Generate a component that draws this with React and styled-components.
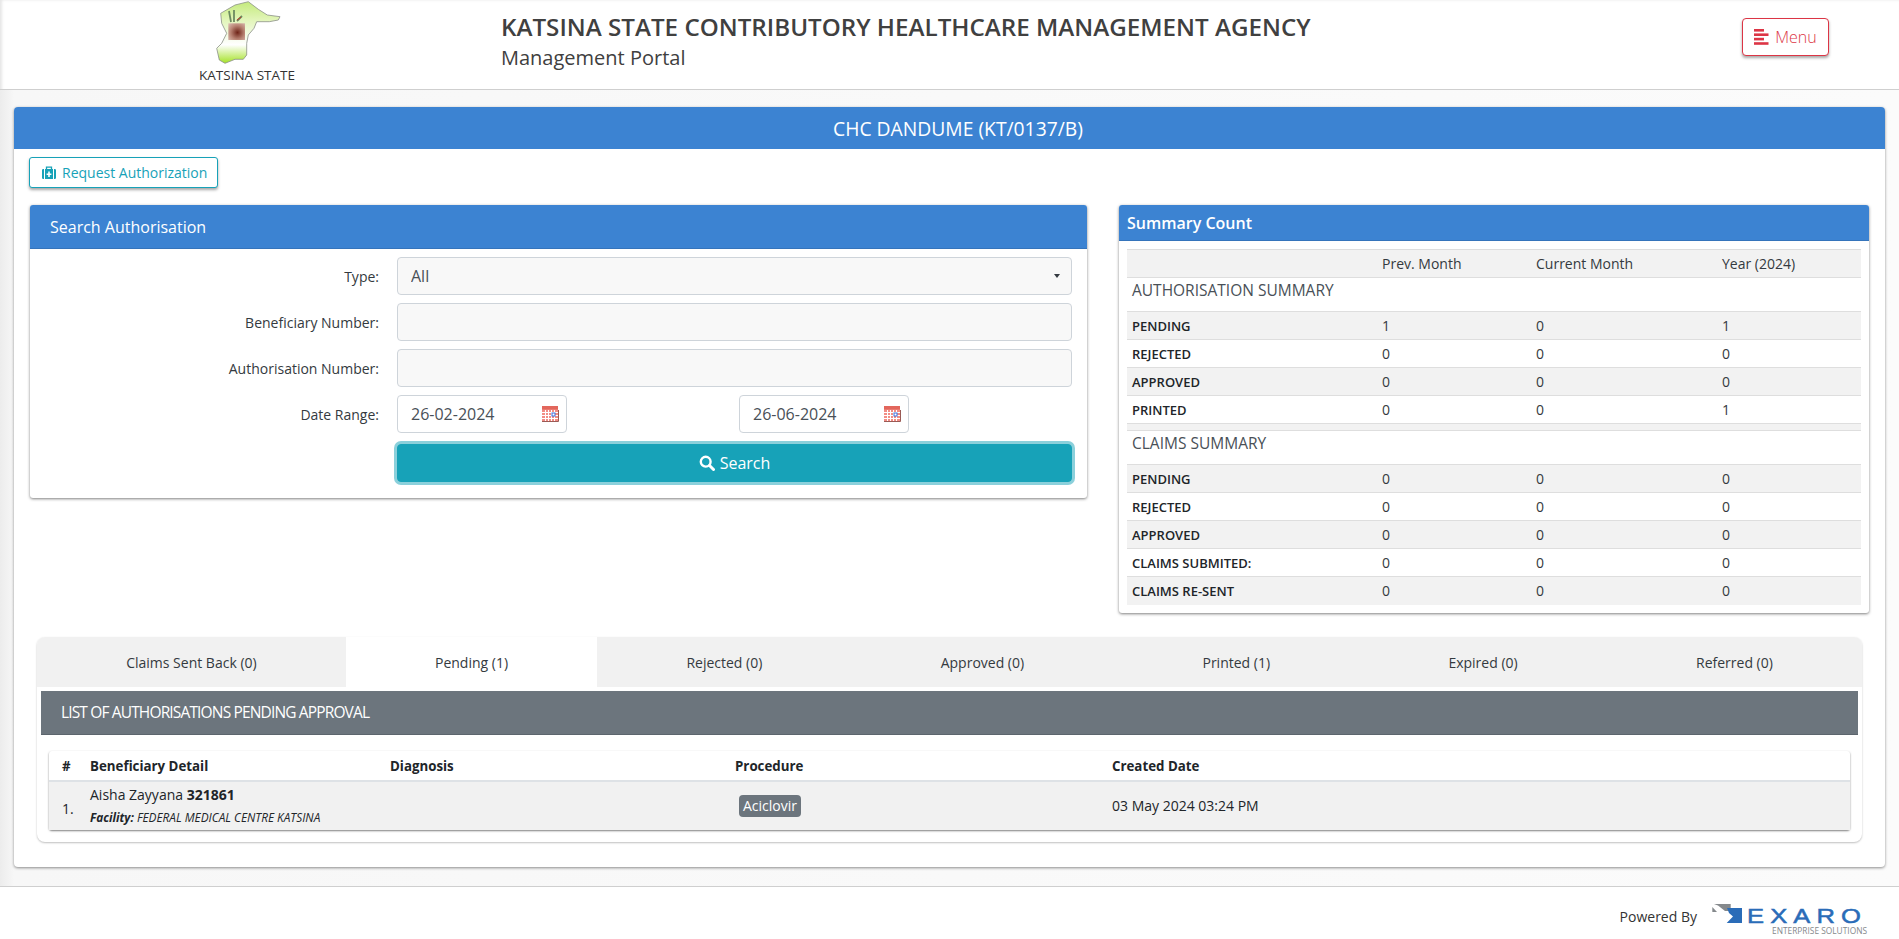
import React from "react";
import styled, { createGlobalStyle } from "styled-components";

const Global = createGlobalStyle`
  html, body { margin: 0; padding: 0; background: #fff; }
  body { font-family: "Open Sans", "Noto Sans", sans-serif; font-size: 14px; color: #212529; }
  * { box-sizing: border-box; }
`;

const Page = styled.div`
  min-height: 939px;
  display: flex;
  flex-direction: column;
  background: #fff;
  box-shadow: inset 2px 0 3px rgba(0, 0, 0, 0.1);
`;

const Header = styled.header`
  height: 90px;
  display: grid;
  grid-template-columns: 494px 1fr auto;
  align-items: start;
  padding-right: 70px;
  border-bottom: 1px solid #cfcfcf;
`;

const LogoBlock = styled.div`
  display: flex;
  flex-direction: column;
  align-items: center;
`;

const StateName = styled.div`
  font-size: 13.5px;
  line-height: 18px;
  margin-top: 2px;
  color: #333;
`;

const TitleBlock = styled.div`
  padding: 9px 0 0 7px;
`;

const Title = styled.div`
  font-size: 24.2px;
  line-height: 36px;
  font-weight: 600;
  color: #404040;
  white-space: nowrap;
`;

const SubTitle = styled.div`
  font-size: 20px;
  line-height: 26px;
  color: #404040;
`;

const MenuButton = styled.button`
  margin-top: 18px;
  width: 87px;
  height: 38px;
  display: flex;
  align-items: center;
  justify-content: center;
  gap: 6px;
  background: #fff;
  color: #dc3545;
  border: 1px solid #dc3545;
  border-radius: 4px;
  font: 300 16px "Open Sans", sans-serif;
  box-shadow: 0 2px 3px rgba(0, 0, 0, 0.35);
`;

const Main = styled.main`
  flex: 1;
  padding: 17px 14px 19px;
  background:
    radial-gradient(ellipse 420px 60px at 420px 915px, #fff 0%, rgba(255, 255, 255, 0) 100%),
    linear-gradient(to right, #ececec 0, #f7f7f7 14px, #fbfbfb 100%);
`;

const Card = styled.section`
  background: #fff;
  border-radius: 4px;
  box-shadow: 0 1px 3px rgba(0, 0, 0, 0.45);
`;

const CardBar = styled.div`
  height: 42px;
  display: flex;
  align-items: center;
  justify-content: center;
  padding-left: 17px;
  background: #3c83d2;
  color: #fff;
  font-size: 19.3px;
  font-weight: 400;
  border-radius: 4px 4px 0 0;
`;

const CardBody = styled.div`
  padding: 8px 16px 25px 15px;
`;

const OutlineButton = styled.button`
  height: 31px;
  width: 189px;
  display: flex;
  align-items: center;
  gap: 6px;
  padding: 0 0 0 12px;
  background: #fff;
  color: #17a2b8;
  border: 1px solid #17a2b8;
  border-radius: 3px;
  font: 400 14px "Open Sans", sans-serif;
  white-space: nowrap;
  box-shadow: 0 2px 3px rgba(0, 0, 0, 0.35);
`;

const PanelRow = styled.div`
  display: grid;
  grid-template-columns: 1057px 750px;
  justify-content: space-between;
  align-items: start;
  margin: 17px 0 0 1px;
`;

const Panel = styled.div`
  background: #fff;
  border-radius: 3px;
  box-shadow: 0 1px 3px rgba(0, 0, 0, 0.5);
`;

const PanelHead = styled.div`
  display: flex;
  align-items: center;
  height: ${(p) => p.$h}px;
  padding-left: ${(p) => p.$pad}px;
  background: #3c83d2;
  border-bottom: 1px solid #3574bb;
  color: #fff;
  font-size: 16px;
  font-weight: ${(p) => p.$weight || 400};
  border-radius: 3px 3px 0 0;
`;

const Form = styled.form`
  display: flex;
  flex-direction: column;
  gap: 8px;
  padding: 8px 15px 16px 0;
`;

const FormRow = styled.div`
  display: grid;
  grid-template-columns: 367px 1fr;
  align-items: center;
`;

const Label = styled.label`
  text-align: right;
  padding-right: 18px;
  font-size: 14px;
  color: #343a40;
`;

const TextInput = styled.input`
  width: 100%;
  height: 38px;
  padding: 0 13px;
  background: #f8f8f8;
  border: 1px solid #ced4da;
  border-radius: 4px;
  color: #495057;
  font: 400 16px "Open Sans", sans-serif;
`;

const SelectWrap = styled.div`
  position: relative;
  &::after {
    content: "";
    position: absolute;
    right: 12px;
    top: 17px;
    border-style: solid;
    border-width: 4.5px 3px 0;
    border-color: #343a40 transparent transparent;
    pointer-events: none;
  }
`;

const Select = styled.select`
  width: 100%;
  height: 38px;
  padding: 0 13px;
  appearance: none;
  background: #f8f8f8;
  border: 1px solid #ced4da;
  border-radius: 4px;
  color: #495057;
  font: 400 16px "Open Sans", sans-serif;
`;

const DateGrid = styled.div`
  display: grid;
  grid-template-columns: 342px 1fr;
`;

const DateBox = styled.div`
  width: 170px;
  height: 38px;
  display: flex;
  align-items: center;
  justify-content: space-between;
  padding: 0 7px 0 13px;
  background: #fff;
  border: 1px solid #ced4da;
  border-radius: 4px;
`;

const DateInput = styled.input`
  width: 120px;
  border: 0;
  padding: 0;
  outline: 0;
  background: transparent;
  color: #495057;
  font: 400 16px "Open Sans", sans-serif;
`;

const SearchButton = styled.button`
  grid-column: 2;
  height: 38px;
  margin-top: 3px;
  display: flex;
  align-items: center;
  justify-content: center;
  gap: 5px;
  background: #17a2b8;
  color: #fff;
  border: 1px solid #17a2b8;
  border-radius: 4px;
  font: 400 16px "Open Sans", sans-serif;
  box-shadow: 0 0 0 3px rgba(23, 162, 184, 0.5);
`;

const SummaryWrap = styled.div`
  padding: 8px;
`;

const SummaryTable = styled.table`
  width: 100%;
  table-layout: fixed;
  border-collapse: collapse;
  font-size: 14px;
  color: #343a40;
  td, th {
    height: 28px;
    padding: 0 5px;
    border-top: 1px solid #dedede;
    text-align: left;
    vertical-align: middle;
    font-weight: 400;
    white-space: nowrap;
  }
`;

const SummaryRow = styled.tr`
  background: ${(p) => (p.$shade ? "#f2f2f2" : "#fff")};
`;

const RowLabel = styled.td`
  && { font-size: 13px; font-weight: 600; color: #212529; }
`;

const SectionCell = styled.td`
  && {
    height: 34px;
    font-size: 15.5px;
    font-weight: 400;
    line-height: 20px;
    vertical-align: top;
    padding-top: 2px;
    color: #495057;
  }
`;

const SpacerCell = styled.td`
  && {
    height: 7px;
    line-height: 0;
    font-size: 0;
    padding: 0;
    background: #f2f2f2;
  }
`;

const TabsPanel = styled.div`
  margin: 24px 7px 0 8px;
  padding-bottom: 12px;
  border-radius: 8px;
  background: #fff;
  box-shadow: 0 1px 2px rgba(0, 0, 0, 0.25);
`;

const TabBar = styled.div`
  display: flex;
  background: #f1f1f1;
  border-radius: 8px 8px 0 0;
`;

const Tab = styled.div`
  flex: 1 1 auto;
  height: 50px;
  padding-top: 1px;
  display: flex;
  align-items: center;
  justify-content: center;
  font-size: 14px;
  color: #343a40;
  background: ${(p) => (p.$active ? "#fff" : "transparent")};
`;

const ListBar = styled.div`
  height: 44px;
  margin: 4px 4px 0;
  padding-left: 20px;
  display: flex;
  align-items: center;
  background: #6c757d;
  border-bottom: 1px solid #5c656d;
  color: #fff;
  font-size: 15.5px;
  letter-spacing: -0.85px;
`;

const ListWrap = styled.div`
  margin: 16px 12px 0;
  background: #fff;
  border-radius: 3px;
  box-shadow: 0 1px 2px rgba(0, 0, 0, 0.5);
`;

const ListTable = styled.table`
  width: 100%;
  table-layout: fixed;
  border-collapse: collapse;
  font-size: 14px;
  color: #212529;
  th {
    height: 30px;
    padding: 1px 0 0;
    text-align: left;
    font-weight: 700;
    font-size: 13.3px;
    border-bottom: 2px solid #dee2e6;
  }
  td {
    height: 49px;
    padding: 0;
    background: #f1f1f1;
    vertical-align: middle;
  }
`;

const IndexHead = styled.th`
  && { padding-left: 13px; }
`;

const IndexCell = styled.td`
  && { padding-left: 13px; padding-top: 5px; }
`;

const Person = styled.div`
  font-size: 14px;
  line-height: 20px;
`;

const Facility = styled.div`
  font-size: 11.8px;
  line-height: 17px;
  font-style: italic;
  margin-top: 4px;
`;

const Badge = styled.span`
  display: inline-block;
  height: 22px;
  margin-left: 4px;
  padding: 0 4px;
  line-height: 22px;
  background: #6c757d;
  color: #fff;
  border-radius: 4px;
  font-size: 14px;
`;

const Footer = styled.footer`
  height: 53px;
  display: flex;
  justify-content: flex-end;
  align-items: flex-start;
  padding-right: 31px;
  background: #fff;
  border-top: 1px solid #cfcfcf;
`;

const Powered = styled.span`
  font-size: 14px;
  margin-top: 20px;
  margin-right: 15px;
  color: #333;
`;

const ExaroLogoBox = styled.div`
  padding-top: 17px;
  line-height: 0;
  svg { overflow: visible; }
`;

const MapLogo = () => (
  <svg width="72" height="64" viewBox="211 0 72 64">
    <defs>
      <linearGradient id="mapFill" x1="0" y1="0" x2="0" y2="1">
        <stop offset="0" stopColor="#c4ea7c" />
        <stop offset="0.3" stopColor="#e2f5ba" />
        <stop offset="0.7" stopColor="#ffffff" />
        <stop offset="1" stopColor="#a4e226" />
      </linearGradient>
      <radialGradient id="mapCentre" cx="0.55" cy="0.55" r="0.75">
        <stop offset="0" stopColor="#6f2418" />
        <stop offset="0.55" stopColor="#b98474" />
        <stop offset="1" stopColor="#dcbfb4" />
      </radialGradient>
    </defs>
    <path
      d="M220.700 13.300 L235 5 L248.300 1.700 L258.300 9.300 L267.300 15 L280 16.700 L278.300 20 L269.300 21.700 L256.700 21.700 L254 28.300 L248.300 35 L246.700 43.300 L246.700 55 L243.300 59.300 L235 59.300 L225 63.300 L219.300 60 L216.700 48.300 L221.700 43.300 L226.700 33.300 L221.700 23.300 Z"
      fill="url(#mapFill)"
      stroke="#8a8f86"
      strokeWidth="0.8"
    />
    <rect x="228.300" y="23.300" width="16.700" height="16.700" fill="url(#mapCentre)" />
    <path d="M229 11 L231 22 M234 10 L234 22 M237 21 L242 16" stroke="#6d8a60" strokeWidth="1.800" />
    <path d="M237 20 L241 17" stroke="#c0392b" strokeWidth="1" />
  </svg>
);

const MenuGlyph = () => (
  <svg width="15" height="16" viewBox="0 0 15 16" fill="#dc3545">
    <rect x="0" y="0" width="10" height="2.600" />
    <rect x="0" y="4.400" width="14.500" height="2.600" />
    <rect x="0" y="8.800" width="10" height="2.600" />
    <rect x="0" y="13.200" width="14.500" height="2.600" />
  </svg>
);

const MedkitGlyph = () => (
  <svg width="14" height="14" viewBox="0 0 14 14">
    <path d="M4.500 3V1.200h5V3" fill="none" stroke="#17a2b8" strokeWidth="1.300" />
    <path
      fill="#17a2b8"
      fillRule="evenodd"
      d="M3 3h8v10H3zM6.200 5.500v2H4.600v1.400h1.600v2h1.600v-2h1.600V7.500H7.800v-2zM0 4.200A1.200 1.200 0 0 1 1.200 3H2v10h-.8A1.200 1.200 0 0 1 0 11.800zM12 3h.8A1.200 1.200 0 0 1 14 4.200v7.600a1.200 1.200 0 0 1-1.200 1.200H12z"
    />
  </svg>
);

const SearchGlyph = () => (
  <svg width="16" height="16" viewBox="0 0 16 16" fill="none" stroke="#fff">
    <circle cx="6.700" cy="6.700" r="4.900" strokeWidth="2.400" />
    <path d="M10.500 10.500 L14.500 14.500" strokeWidth="3" strokeLinecap="round" />
  </svg>
);

const CalendarGlyph = () => (
  <svg width="17" height="16" viewBox="0 0 17 16">
    <rect x="0" y="0" width="16" height="15" fill="#f28d85" />
    <rect x="0" y="0" width="16" height="3.500" fill="#e2665c" />
    <path d="M0 6.500h16M0 9.500h16M0 12.500h16M3.500 4v11M6.500 4v11M9.500 4v11M12.500 4v11" stroke="#fff" strokeWidth="1" />
    <rect x="10" y="7" width="3" height="3" fill="#fff" stroke="#3a6fe0" strokeWidth="1" />
    <path d="M16.500 4v11.500H0" fill="none" stroke="#9a5a55" strokeWidth="1" />
  </svg>
);

const ExaroLogo = () => (
  <svg width="156" height="34" viewBox="0 0 156 34">
    <path d="M2 0 H18.700 V7 H13 L6 1.500 Z" fill="#85898c" />
    <path d="M0.300 3 V8 H5 Z" fill="#85898c" />
    <path d="M15 4 H30 V19 H14.700 L21 12.500 L17 9 Z" fill="#2a6cb8" />
    <text
      x="35"
      y="19"
      textLength="120"
      lengthAdjust="spacingAndGlyphs"
      letterSpacing="5"
      fontFamily="Liberation Sans, sans-serif"
      fontSize="21"
      fontWeight="400"
      stroke="#2a6cb8"
      strokeWidth="0.5"
      fill="#2a6cb8"
    >
      EXARO
    </text>
    <text
      x="60"
      y="30"
      textLength="95"
      lengthAdjust="spacingAndGlyphs"
      fontFamily="Open Sans, sans-serif"
      fontSize="9.500"
      fill="#85898c"
    >
      ENTERPRISE SOLUTIONS
    </text>
  </svg>
);

const authRows = [
  ["PENDING", 1, 0, 1],
  ["REJECTED", 0, 0, 0],
  ["APPROVED", 0, 0, 0],
  ["PRINTED", 0, 0, 1],
];

const claimRows = [
  ["PENDING", 0, 0, 0],
  ["REJECTED", 0, 0, 0],
  ["APPROVED", 0, 0, 0],
  ["CLAIMS SUBMITED:", 0, 0, 0],
  ["CLAIMS RE-SENT", 0, 0, 0],
];

const tabs = [
  "Claims Sent Back (0)",
  "Pending (1)",
  "Rejected (0)",
  "Approved (0)",
  "Printed (1)",
  "Expired (0)",
  "Referred (0)",
];

const CountRows = ({ rows }) =>
  rows.map((r, i) => (
    <SummaryRow key={r[0]} $shade={i % 2 === 0}>
      <RowLabel>{r[0]}</RowLabel>
      <td>{r[1]}</td>
      <td>{r[2]}</td>
      <td>{r[3]}</td>
    </SummaryRow>
  ));

export default function App() {
  return (
    <Page>
      <Global />
      <Header>
        <LogoBlock>
          <MapLogo />
          <StateName>KATSINA STATE</StateName>
        </LogoBlock>
        <TitleBlock>
          <Title>KATSINA STATE CONTRIBUTORY HEALTHCARE MANAGEMENT AGENCY</Title>
          <SubTitle>Management Portal</SubTitle>
        </TitleBlock>
        <MenuButton>
          <MenuGlyph />
          Menu
        </MenuButton>
      </Header>
      <Main>
        <Card>
          <CardBar>CHC DANDUME (KT/0137/B)</CardBar>
          <CardBody>
            <OutlineButton>
              <MedkitGlyph />
              Request Authorization
            </OutlineButton>
            <PanelRow>
              <Panel>
                <PanelHead $h={44} $pad={20}>Search Authorisation</PanelHead>
                <Form>
                  <FormRow>
                    <Label>Type:</Label>
                    <SelectWrap>
                      <Select defaultValue="All">
                        <option>All</option>
                      </Select>
                    </SelectWrap>
                  </FormRow>
                  <FormRow>
                    <Label>Beneficiary Number:</Label>
                    <TextInput />
                  </FormRow>
                  <FormRow>
                    <Label>Authorisation Number:</Label>
                    <TextInput />
                  </FormRow>
                  <FormRow>
                    <Label>Date Range:</Label>
                    <DateGrid>
                      <DateBox>
                        <DateInput defaultValue="26-02-2024" />
                        <CalendarGlyph />
                      </DateBox>
                      <DateBox>
                        <DateInput defaultValue="26-06-2024" />
                        <CalendarGlyph />
                      </DateBox>
                    </DateGrid>
                  </FormRow>
                  <FormRow>
                    <SearchButton type="button">
                      <SearchGlyph />
                      Search
                    </SearchButton>
                  </FormRow>
                </Form>
              </Panel>
              <Panel>
                <PanelHead $h={36} $pad={8} $weight={600}>Summary Count</PanelHead>
                <SummaryWrap>
                  <SummaryTable>
                    <colgroup>
                      <col style={{ width: 250 }} />
                      <col style={{ width: 154 }} />
                      <col style={{ width: 186 }} />
                      <col />
                    </colgroup>
                    <thead>
                      <SummaryRow $shade>
                        <th></th>
                        <th>Prev. Month</th>
                        <th>Current Month</th>
                        <th>Year (2024)</th>
                      </SummaryRow>
                    </thead>
                    <tbody>
                      <SummaryRow>
                        <SectionCell colSpan={4}>AUTHORISATION SUMMARY</SectionCell>
                      </SummaryRow>
                      <CountRows rows={authRows} />
                      <tr>
                        <SpacerCell colSpan={4} />
                      </tr>
                      <SummaryRow>
                        <SectionCell colSpan={4}>CLAIMS SUMMARY</SectionCell>
                      </SummaryRow>
                      <CountRows rows={claimRows} />
                    </tbody>
                  </SummaryTable>
                </SummaryWrap>
              </Panel>
            </PanelRow>
            <TabsPanel>
              <TabBar>
                {tabs.map((t) => (
                  <Tab key={t} $active={t.startsWith("Pending")}>{t}</Tab>
                ))}
              </TabBar>
              <ListBar>LIST OF AUTHORISATIONS PENDING APPROVAL</ListBar>
              <ListWrap>
                <ListTable>
                  <colgroup>
                    <col style={{ width: 41 }} />
                    <col style={{ width: 300 }} />
                    <col style={{ width: 345 }} />
                    <col style={{ width: 377 }} />
                    <col />
                  </colgroup>
                  <thead>
                    <tr>
                      <IndexHead>#</IndexHead>
                      <th>Beneficiary Detail</th>
                      <th>Diagnosis</th>
                      <th>Procedure</th>
                      <th>Created Date</th>
                    </tr>
                  </thead>
                  <tbody>
                    <tr>
                      <IndexCell>1.</IndexCell>
                      <td>
                        <Person>
                          Aisha Zayyana <b>321861</b>
                        </Person>
                        <Facility>
                          <b>Facility:</b> FEDERAL MEDICAL CENTRE KATSINA
                        </Facility>
                      </td>
                      <td></td>
                      <td>
                        <Badge>Aciclovir</Badge>
                      </td>
                      <td>03 May 2024 03:24 PM</td>
                    </tr>
                  </tbody>
                </ListTable>
              </ListWrap>
            </TabsPanel>
          </CardBody>
        </Card>
      </Main>
      <Footer>
        <Powered>Powered By</Powered>
        <ExaroLogoBox>
          <ExaroLogo />
        </ExaroLogoBox>
      </Footer>
    </Page>
  );
}
